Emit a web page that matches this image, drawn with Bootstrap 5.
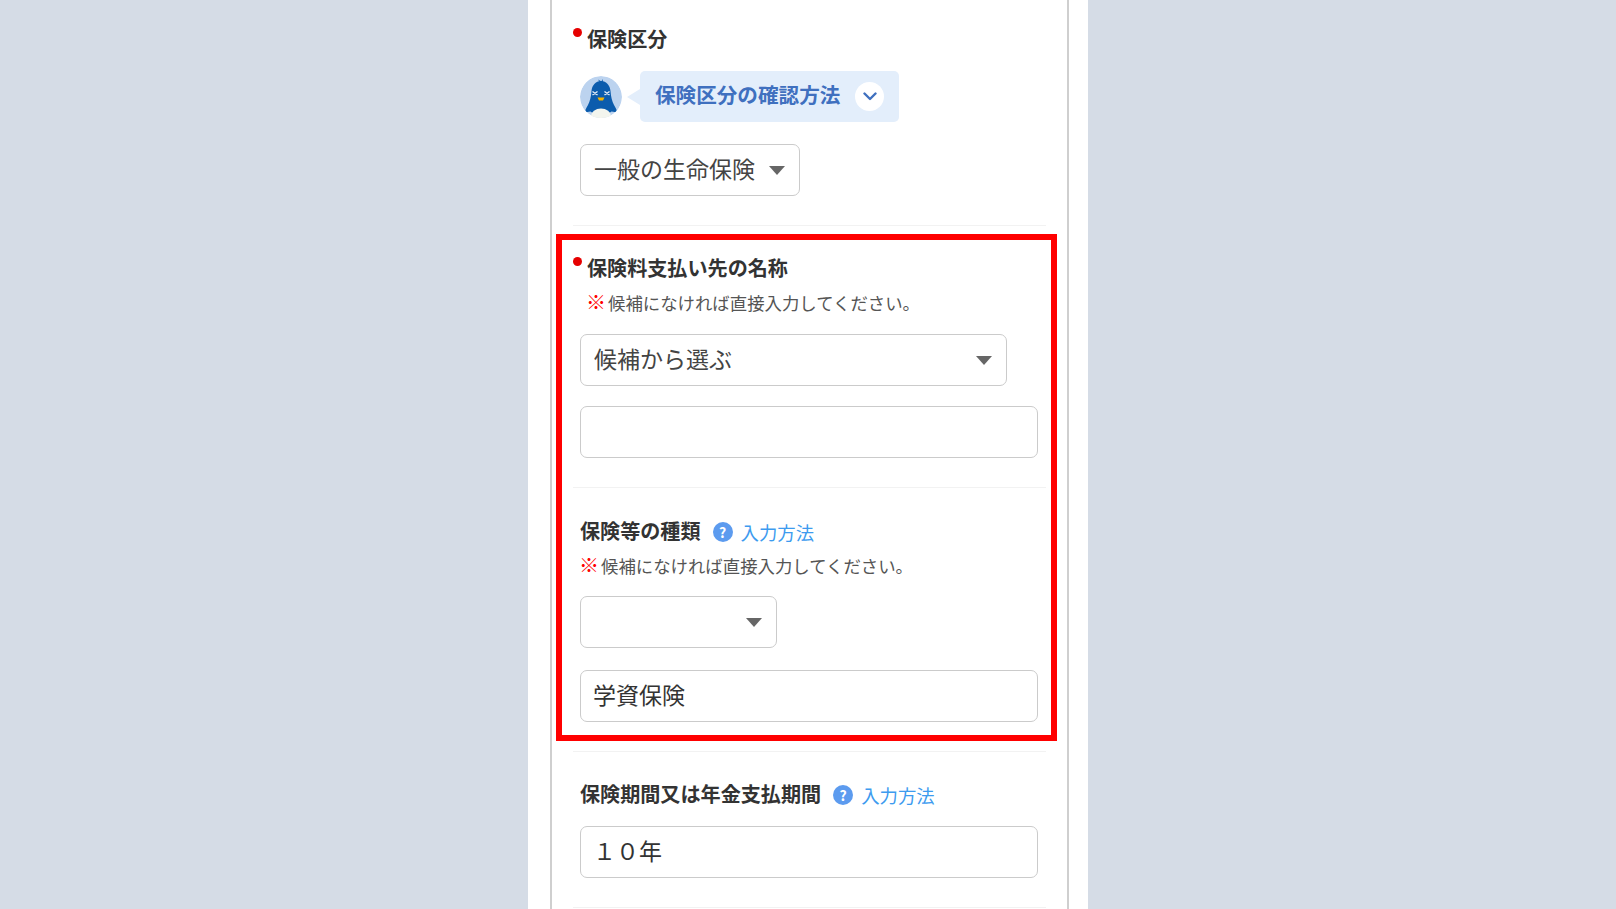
<!DOCTYPE html>
<html lang="ja">
<head>
<meta charset="utf-8">
<title>保険区分</title>
<link href="https://cdn.jsdelivr.net/npm/bootstrap@5.3.0/dist/css/bootstrap.min.css" rel="stylesheet">
<style>
html, body { height: 909px; overflow: hidden; }
body { background: #d5dce6; font-family: "Noto Sans CJK JP", "Noto Sans", sans-serif; color: #333; }
.sheet { width: 560px; height: 909px; margin: 0 auto; background: #fff; padding: 0 19px 0 22px; }
.panel { height: 909px; border-left: 2px solid #cfcfcf; border-right: 2px solid #cfcfcf; padding: 0 21px; }
.sect { border-bottom: 1.5px solid #f2f2f2; padding-bottom: 29px; }
.s1 { padding-top: 24px; }
.s2 { padding-top: 27px; }
.s3 { padding-top: 28px; }
.s4 { padding-top: 27px; }
.s1 .tipline { margin-top: 17px; }
.redzone { position: relative; }
.redframe { position: absolute; top: 8px; bottom: 11px; left: -17px; right: -11px; border: 6px solid #f00; pointer-events: none; }
.fieldrow { height: 30px; font-size: 20.1px; line-height: 28px; font-weight: 700; color: #333; }
.reqdot { width: 9px; height: 9px; border-radius: 50%; background: #e60000; margin-top: -14px; margin-right: 5px; flex: none; }
.inset { padding-left: 7px; }
.tipline { height: 51px; }
.avatar { width: 42px; height: 42px; flex: none; }
.bubble { position: relative; margin-left: 18px; width: 259px; height: 51px; background: #e3eefb; border-radius: 5px; padding: 0 0 5px 15px; font-size: 20.6px; font-weight: 700; color: #3f70bf; }
.bubble::before { content: ""; position: absolute; left: -13px; top: 18px; border: 8px solid transparent; border-left: 0; border-right: 13px solid #e3eefb; }
.chev { width: 29px; height: 29px; flex: none; margin: 5px 0 0 15px; background: #fff; border-radius: 50%; }
.form-select.pick, .form-control.entry { height: 52px; border: 1.5px solid #cbcbcb; border-radius: 7px; font-size: 23px; color: #444; box-shadow: none; }
.form-select.pick { padding: 0 40px 3px 13px; background-image: url("data:image/svg+xml,%3Csvg xmlns='http://www.w3.org/2000/svg' viewBox='0 0 16 9'%3E%3Cpath d='M0 0h16L8 9z' fill='%23666'/%3E%3C/svg%3E"); background-size: 16px 9px; background-position: right 14px center; }
.form-control.entry { padding: 0 12px 4px; width: 458px; color: #333; }
.w-a { width: 220px; margin-top: 22px; }
.w-b { width: 427px; margin-top: 19px; }
.w-c { width: 197px; margin-top: 18px; }
.gap-a { margin-top: 20px; }
.gap-b { margin-top: 22px; }
.gap-c { margin-top: 17px; }
.noteline { height: 24px; line-height: 24px; font-size: 17.4px; color: #555; }
.noteline b { color: #f00; font-size: 20px; line-height: 0; font-weight: 700; margin: 0 2px 0 -1px; }
.n1 { margin-top: 8px; padding-left: 14px; }
.n2 { margin-top: 8px; }
.qmark { width: 20px; height: 20px; margin: 2px 8px 0 12px; border-radius: 50%; background: #5c9bef; color: #fff; font-size: 14px; line-height: 20px; font-weight: 700; text-align: center; flex: none; }
.howto { font-size: 18.4px; font-weight: 400; color: #3d9bef; text-decoration: none; margin-top: 2px; }
</style>
</head>
<body>
<div class="sheet">
  <div class="panel">
    <section class="sect s1">
      <div class="d-flex align-items-center fieldrow"><span class="reqdot"></span>保険区分</div>
      <div class="inset">
        <div class="d-flex align-items-center tipline">
          <svg class="avatar" viewBox="0 0 42 42" aria-hidden="true">
            <defs><clipPath id="round"><circle cx="21" cy="21" r="21"/></clipPath></defs>
            <g clip-path="url(#round)">
              <circle cx="21" cy="21" r="21" fill="#bcd3ef"/>
              <path d="M20 6.500l-2-3 3.500 2 1-2.500.5 3.500z" fill="#0b5cad"/>
              <path d="M21 5c5.500 0 9 4.500 9.500 10 .5 6 1.500 10 3.500 14 1.300 2.500 3 4.500 2.500 6-.6 1.600-3 1-5 .5-1.500 1.500-5 3-10.500 3s-9-1.500-10.500-3c-2 .5-4.400 1.100-5-.5-.5-1.500 1.200-3.500 2.500-6 2-4 3-8 3.500-14 .5-5.500 4-10 9.500-10z" fill="#0b5cad"/>
              <ellipse cx="21" cy="40" rx="10" ry="7.500" fill="#f3f5ee"/>
              <path d="M12.500 15.500l5 3.500m-5 0l5-3.500M24.500 15.500l5 3.500m-5 0l5-3.500" stroke="#e4edf7" stroke-width="1.400" fill="none"/>
              <path d="M17.500 21.500h7l-1.500 3h-4z" fill="#f4b400"/>
            </g>
          </svg>
          <div class="d-flex align-items-center bubble">保険区分の確認方法
            <span class="d-flex align-items-center justify-content-center chev">
              <svg width="14" height="9" viewBox="0 0 14 9" aria-hidden="true"><path d="M1.500 1.500L7 7l5.500-5.500" fill="none" stroke="#3f70bf" stroke-width="2.400" stroke-linecap="round" stroke-linejoin="round"/></svg>
            </span>
          </div>
        </div>
        <select class="form-select pick w-a"><option>一般の生命保険</option></select>
      </div>
    </section>

    <div class="redzone">
      <section class="sect s2">
        <div class="d-flex align-items-center fieldrow"><span class="reqdot"></span>保険料支払い先の名称</div>
        <div class="noteline n1"><b>※</b>候補になければ直接入力してください。</div>
        <div class="inset">
          <select class="form-select pick w-b"><option>候補から選ぶ</option></select>
          <input class="form-control entry gap-a" type="text" value="" aria-label="保険料支払い先の名称">
        </div>
      </section>
      <section class="sect s3 inset">
        <div class="d-flex align-items-center fieldrow">保険等の種類<span class="qmark">?</span><a class="howto" href="#">入力方法</a></div>
        <div class="noteline n2"><b>※</b>候補になければ直接入力してください。</div>
        <select class="form-select pick w-c" aria-label="保険等の種類"><option></option></select>
        <input class="form-control entry gap-b" type="text" value="学資保険" aria-label="保険等の種類">
      </section>
      <div class="redframe"></div>
    </div>

    <section class="sect s4 inset">
      <div class="d-flex align-items-center fieldrow">保険期間又は年金支払期間<span class="qmark">?</span><a class="howto" href="#">入力方法</a></div>
      <input class="form-control entry gap-c" type="text" value="１０年" aria-label="保険期間又は年金支払期間">
    </section>
  </div>
</div>
<script src="https://cdn.jsdelivr.net/npm/bootstrap@5.3.0/dist/js/bootstrap.bundle.min.js"></script>
</body>
</html>
